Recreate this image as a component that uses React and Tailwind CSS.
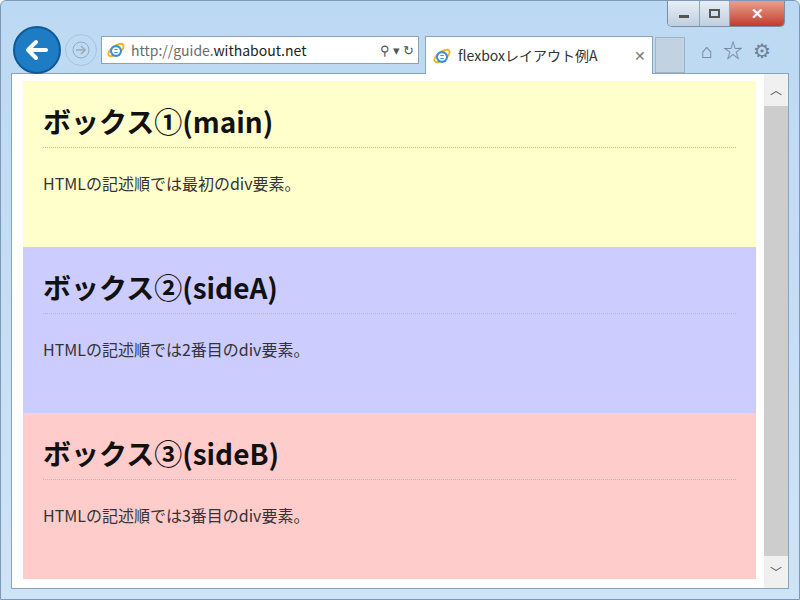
const font = { fontFamily: '"Noto Sans CJK JP", "Noto Sans", sans-serif' };

const Box = ({ bg, title, text }) => (
  <div className={`${bg} h-[166px] px-[20px] pt-[20px]`}>
    <h1 className="text-[28px] font-semibold leading-[40px] text-[#111] pb-[6px] border-b border-dotted border-[#b8b8b8]">{title}</h1>
    <p className="mt-[23px] text-[16px] text-[#333]">{text}</p>
  </div>
);

const IeLogo = ({ size = 20 }) => (
  <svg width={size} height={size} viewBox="0 0 20 20">
    <ellipse cx="10" cy="10" rx="9" ry="4" fill="none" stroke="#f3b61f" strokeWidth="2" transform="rotate(-35 10 10)" />
    <circle cx="10" cy="11" r="6" fill="#3a8fd8" />
    <rect x="6" y="10" width="8" height="2" fill="#fff" />
    <circle cx="10" cy="11" r="3" fill="none" stroke="#fff" strokeWidth="1.5" />
  </svg>
);

export default function App() {
  return (
    <div style={font} className="w-[800px] h-[600px] bg-gradient-to-b from-[#bcd9f3] to-[#cfe3f6] relative overflow-hidden border border-[#7d99b8] rounded-t-[6px]">
      <div className="absolute right-[14px] top-0 flex h-[26px] border border-[#7d8ea3] border-t-0 rounded-b-[5px] overflow-hidden">
        <div className="w-[32px] bg-gradient-to-b from-[#e8eef5] to-[#bfcfe0] flex items-end justify-center pb-[8px] border-r border-[#8aa]"><div className="w-[10px] h-[3px] bg-[#555]" /></div>
        <div className="w-[30px] bg-gradient-to-b from-[#e8eef5] to-[#bfcfe0] flex items-center justify-center border-r border-[#8aa]"><div className="w-[11px] h-[9px] border-2 border-[#555]" /></div>
        <div className="w-[54px] bg-gradient-to-b from-[#e8a090] to-[#c0392b] flex items-center justify-center text-white font-bold text-[15px]">✕</div>
      </div>
      <div className="flex items-center h-[72px] pt-[26px] pl-[12px]">
        <div className="w-[48px] h-[48px] rounded-full bg-[#1d7cc4] border-2 border-[#0f5a96] flex items-center justify-center">
          <svg width="26" height="26" viewBox="0 0 26 26"><path d="M22 13H5M12 5l-8 8 8 8" fill="none" stroke="#fff" strokeWidth="4" strokeLinecap="round" strokeLinejoin="round" /></svg>
        </div>
        <div className="w-[32px] h-[32px] rounded-full border border-[#a9c3dd] ml-[4px] flex items-center justify-center">
          <svg width="20" height="20" viewBox="0 0 20 20"><circle cx="10" cy="10" r="8" fill="none" stroke="#9ab" /><path d="M5 10h9M10 6l4 4-4 4" fill="none" stroke="#9ab" strokeWidth="1.5" /></svg>
        </div>
        <div className="ml-[4px] h-[28px] w-[318px] bg-white border border-[#8aa3bd] flex items-center px-[4px] gap-[5px] text-[14px]">
          <IeLogo />
          <span className="text-[#6b6b6b]">http://guide.<span className="text-[#222]">withabout.net</span></span>
          <span className="ml-auto text-[#555] text-[13px]">⚲ ▾ ↻</span>
        </div>
        <div className="ml-[6px] h-[38px] mt-[10px] w-[228px] bg-white border border-[#8aa3bd] border-b-0 flex items-center px-[6px] gap-[6px] text-[14px] text-[#333]">
          <IeLogo />
          <span>flexboxレイアウト例A</span>
          <span className="ml-auto text-[#777]">✕</span>
        </div>
        <div className="ml-[2px] mt-[10px] w-[30px] h-[36px] bg-[#c3d2e0] border border-[#9fb3c6]" />
        <div className="ml-[16px] flex gap-[10px] text-[#6f8196] text-[20px]"><span>⌂</span><span>☆</span><span>⚙</span></div>
      </div>
      <div className="mx-[10px] h-[516px] bg-white border border-[#8aa3bd] flex">
        <div className="flex-1 pl-[11px] pr-[8px] pt-[7px]">
          <Box bg="bg-[#ffffcc]" title="ボックス①(main)" text="HTMLの記述順では最初のdiv要素。" />
          <Box bg="bg-[#ccccff]" title="ボックス②(sideA)" text="HTMLの記述順では2番目のdiv要素。" />
          <Box bg="bg-[#ffcccc]" title="ボックス③(sideB)" text="HTMLの記述順では3番目のdiv要素。" />
        </div>
        <div className="w-[24px] flex flex-col bg-[#f0f0f0]">
          <div className="h-[32px] flex items-center justify-center text-[#555] text-[12px]">︿</div>
          <div className="flex-1 bg-[#cdcdcd]" />
          <div className="h-[32px] flex items-center justify-center text-[#555] text-[12px]">﹀</div>
        </div>
      </div>
    </div>
  );
}
